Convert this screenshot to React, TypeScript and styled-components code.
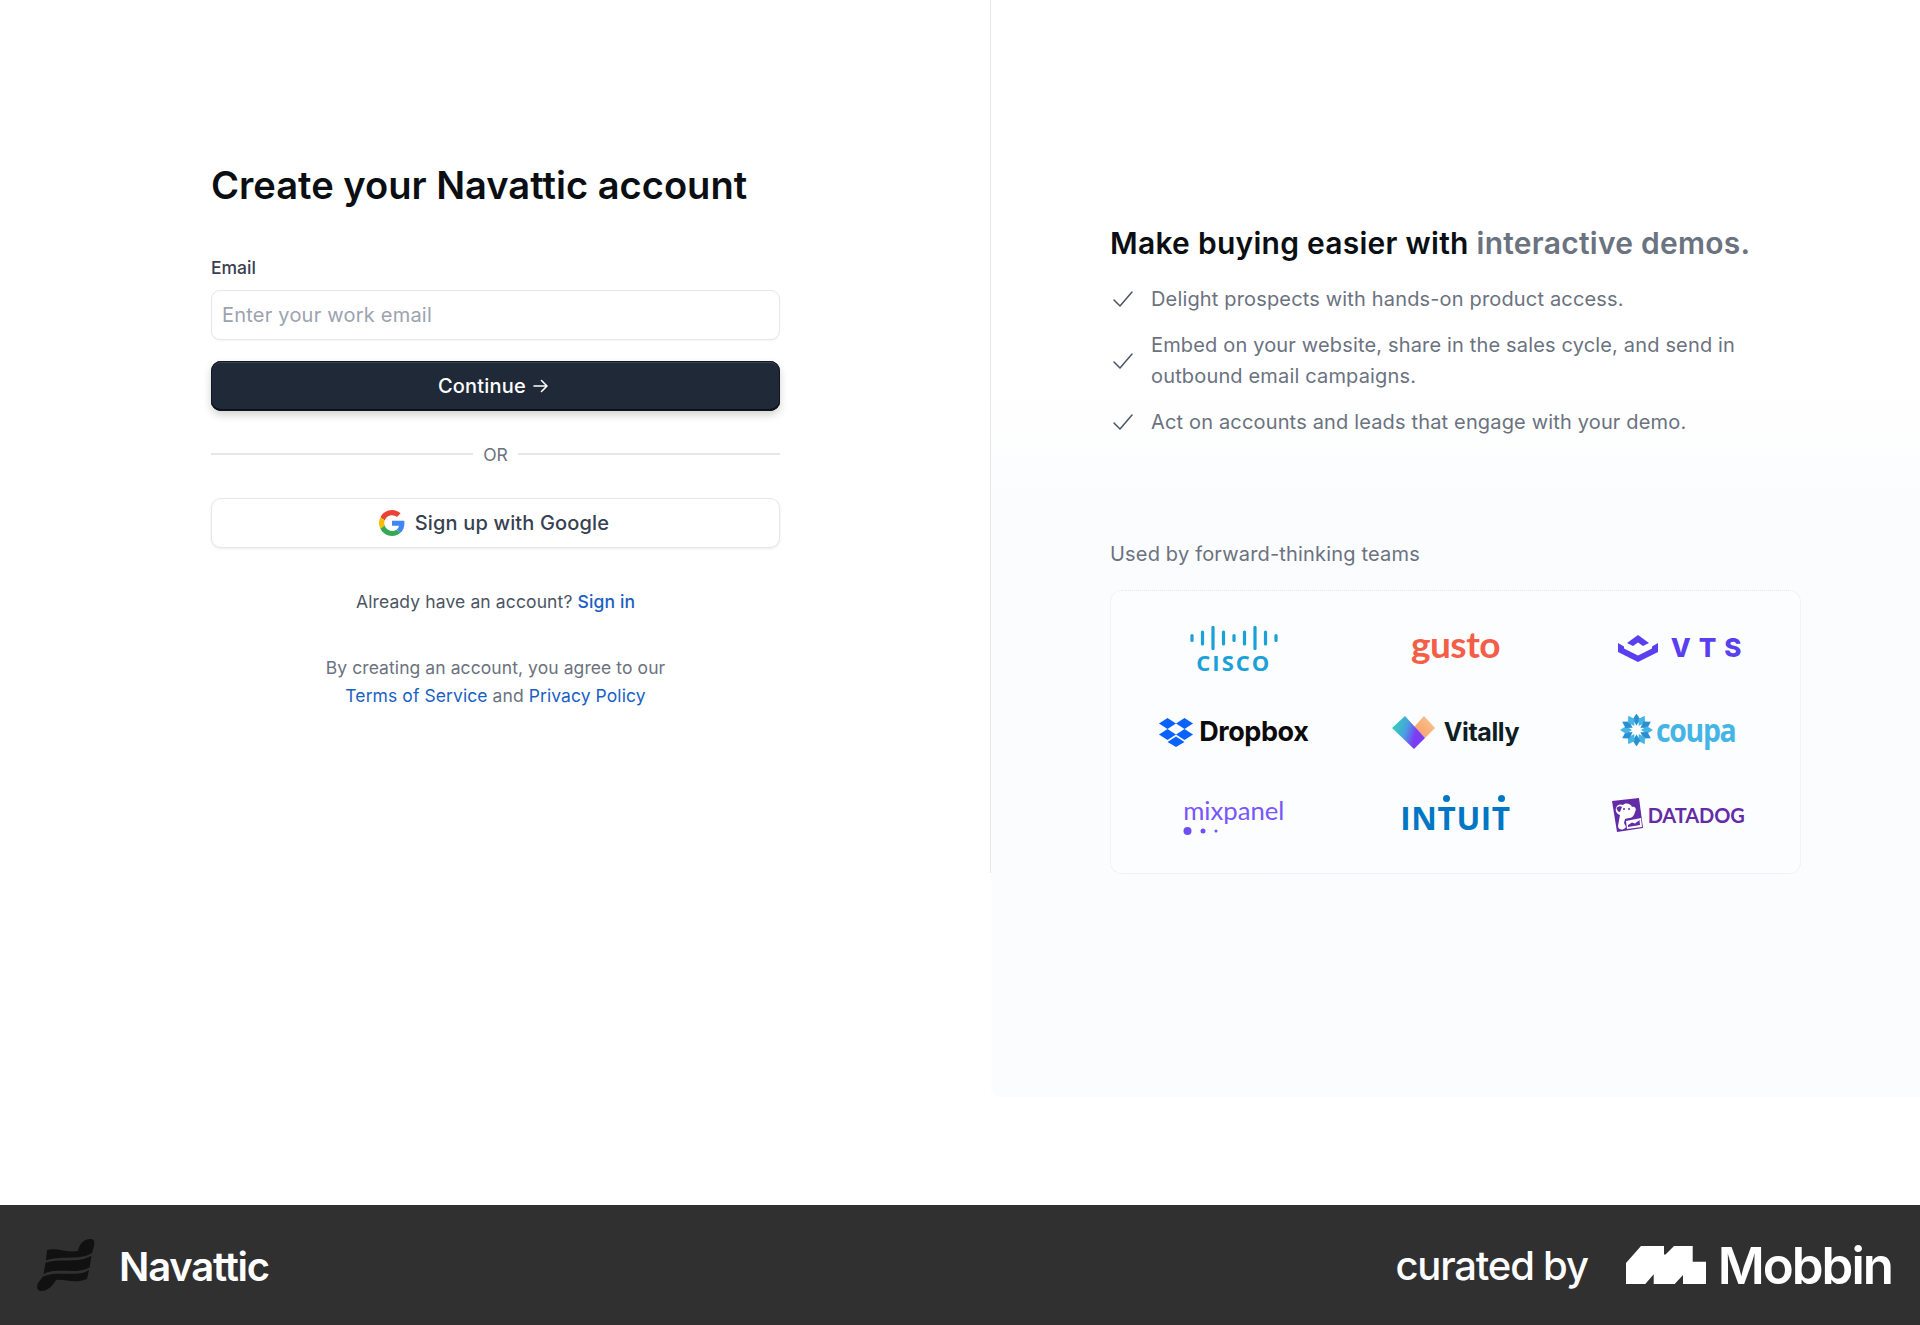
import React from "react";
import styled, { createGlobalStyle } from "styled-components";

const Global = createGlobalStyle`
  html, body { margin: 0; padding: 0; background: #fff; }
  body { font-family: Inter, "Liberation Sans", sans-serif; -webkit-font-smoothing: antialiased; }
  * { box-sizing: border-box; }
`;

const Page = styled.div`
  width: 1920px;
  height: 1325px;
  display: flex;
  flex-direction: column;
  overflow: hidden;
`;
const Top = styled.div`
  height: 1205px;
  display: flex;
  align-items: flex-start;
`;
const LeftPanel = styled.section`
  width: 991px;
  height: 873px;
  flex: none;
  border-right: 1px solid #e5e7eb;
  padding: 160px 0 0 211px;
`;
const Form = styled.div`
  width: 569px;
  display: flex;
  flex-direction: column;
`;
const Title = styled.h1`
  margin: 0 0 45px;
  font-size: 38.100px;
  line-height: 50px;
  font-weight: 600;
  color: #0b0f14;
  white-space: nowrap;
`;
const Label = styled.label`
  font-size: 17.5px;
  line-height: 25px;
  font-weight: 500;
  color: #374151;
  margin-bottom: 10px;
`;
const Input = styled.input`
  height: 50px;
  border: 1.5px solid #e5e7eb;
  border-radius: 9px;
  background: #fff;
  padding: 0 10px;
  font: 400 20px Inter, sans-serif;
  letter-spacing: 0.22px;
  color: #111827;
  box-shadow: 0 1px 2px rgba(0, 0, 0, 0.04);
  outline: none;
  &::placeholder { color: #9ca3af; opacity: 1; }
`;
const PrimaryButton = styled.button`
  margin-top: 21px;
  height: 50px;
  border: none;
  border-radius: 10px;
  padding: 0 5px 0 0;
  background: #1f2937;
  color: #fff;
  font: 500 20px Inter, sans-serif;
  letter-spacing: 0.2px;
  display: flex;
  align-items: center;
  justify-content: center;
  gap: 7px;
  box-shadow: inset 0 0 0 1px #10161f, inset 0 -2px 0 #0c1118, inset 0 2px 0 #3b4450, 0 4px 8px rgba(0, 0, 0, 0.18);
`;
const Divider = styled.div`
  margin-top: 31px;
  height: 24px;
  display: flex;
  align-items: center;
  gap: 10px;
  font-size: 17.5px;
  color: #6b7280;
  &::before, &::after { content: ""; flex: 1; height: 1.5px; background: #e5e7eb; }
`;
const GoogleButton = styled.button`
  margin-top: 32px;
  height: 50px;
  border: 1.5px solid #e5e7eb;
  border-radius: 10px;
  padding: 0 3px 0 0;
  background: #fff;
  color: #374151;
  font: 500 20px Inter, sans-serif;
  letter-spacing: 0.15px;
  display: flex;
  align-items: center;
  justify-content: center;
  gap: 10px;
  box-shadow: 0 1px 3px rgba(0, 0, 0, 0.08);
`;
const Already = styled.p`
  margin: 41px 0 0;
  text-align: center;
  font-size: 17.5px;
  line-height: 25px;
  letter-spacing: 0.12px;
  color: #4b5563;
`;
const Terms = styled.p`
  margin: 40px 0 0;
  text-align: center;
  font-size: 17.5px;
  line-height: 27.5px;
  letter-spacing: 0.08px;
  color: #6b7280;
`;
const TextLink = styled.a<{ $strong?: boolean }>`
  color: #1a5fc4;
  font-weight: ${(p) => (p.$strong ? 500 : 400)};
  text-decoration: none;
`;

const RightPanel = styled.section`
  flex: 1;
  height: 1097px;
  background: linear-gradient(#ffffff 0, #ffffff 380px, #fbfcfe 520px, #fbfcfe 100%);
  border-bottom-left-radius: 8px;
  padding: 220px 0 0 119px;
`;
const Heading = styled.h2`
  margin: 0 0 17.500px;
  font-size: 30px;
  line-height: 46px;
  font-weight: 600;
  letter-spacing: 0.26px;
  color: #0b0f14;
  white-space: nowrap;
`;
const Muted = styled.span`
  color: #6b7280;
`;
const Benefits = styled.ul`
  list-style: none;
  margin: 0;
  padding: 0;
  width: 640px;
  display: flex;
  flex-direction: column;
  gap: 15px;
`;
const Benefit = styled.li`
  display: flex;
  align-items: center;
  gap: 17px;
  font-size: 20px;
  line-height: 31px;
  letter-spacing: 0.16px;
  color: #6b7280;
`;
const Used = styled.p`
  margin: 101.500px 0 0;
  font-size: 20px;
  line-height: 30px;
  letter-spacing: 0.18px;
  color: #6b7280;
`;
const LogoCard = styled.div`
  margin-top: 21px;
  width: 691px;
  height: 284px;
  background: rgba(255, 255, 255, 0.4);
  border: 1.5px dotted #e4e6ea;
  border-radius: 12px;
  padding: 15px 12px;
  display: grid;
  grid-template-columns: repeat(3, 1fr);
  grid-auto-rows: 84px;
`;
const LogoCell = styled.div<{ $left?: number; $top?: number; $bottom?: number }>`
  display: flex;
  align-items: center;
  justify-content: center;
  padding-left: ${(p) => p.$left ?? 0}px;
  padding-top: ${(p) => p.$top ?? 0}px;
  padding-bottom: ${(p) => p.$bottom ?? 0}px;
`;
const CiscoStack = styled.div`
  display: flex;
  flex-direction: column;
  align-items: center;
  gap: 2px;
`;
const CiscoWord = styled.span`
  font: 700 22px/21px "Open Sans", sans-serif;
  letter-spacing: 2px;
  color: #1ba0d7;
`;
const Gusto = styled.span`
  font: 700 37px/40px Lato, sans-serif;
  letter-spacing: -0.5px;
  color: #f45d48;
`;
const VtsWord = styled.span`
  font: 800 26px/30px Inter, sans-serif;
  letter-spacing: 8px;
  margin-left: 13px;
  margin-right: -8px;
  color: #5a3ff0;
`;
const DropboxWord = styled.span`
  font: 700 27px/30px Inter, sans-serif;
  letter-spacing: -0.4px;
  margin-left: 6px;
  color: #0b0b0b;
`;
const VitallyWord = styled.span`
  font: 700 25px/30px Inter, sans-serif;
  letter-spacing: -0.4px;
  margin-left: 9px;
  color: #0f1d24;
`;
const CoupaWord = styled.span`
  display: inline-block;
  font: 700 33px/34px "Open Sans", sans-serif;
  letter-spacing: -1.5px;
  margin-left: 2px;
  margin-right: -13px;
  transform: scaleX(0.86);
  transform-origin: left center;
  color: #45b5e6;
`;
const MixStack = styled.div`
  display: flex;
  flex-direction: column;
  align-items: flex-start;
  gap: 3px;
`;
const MixWord = styled.span`
  font: 400 25.700px/26px Lato, sans-serif;
  color: #7856ff;
`;
const Intuit = styled.span`
  font: 700 31.500px/31px "Open Sans", sans-serif;
  letter-spacing: 0.6px;
  color: #0077c5;
`;
const IntuitT = styled.span`
  position: relative;
  &::before {
    content: "";
    position: absolute;
    left: 50%;
    top: -1px;
    width: 7px;
    height: 7px;
    margin-left: -3.500px;
    border-radius: 50%;
    background: #0077c5;
  }
`;
const DatadogWord = styled.span`
  font: 700 20px/24px Lato, sans-serif;
  letter-spacing: -0.1px;
  margin-left: 5px;
  color: #632ca6;
`;

const Footer = styled.footer`
  height: 120px;
  background: #303030;
  display: flex;
  align-items: center;
  justify-content: space-between;
  padding: 0 28px 0 37px;
`;
const Brand = styled.div`
  display: flex;
  align-items: center;
  gap: 24px;
`;
const BrandName = styled.span`
  font-size: 40px;
  line-height: 48px;
  font-weight: 600;
  letter-spacing: -1.2px;
  padding-top: 4px;
  color: #fff;
`;
const Curated = styled.div`
  display: flex;
  align-items: center;
`;
const CuratedBy = styled.span`
  font-size: 40px;
  font-weight: 500;
  letter-spacing: -1.2px;
  color: #fff;
  margin-right: 38px;
`;
const Mobbin = styled.span`
  font-size: 51px;
  font-weight: 600;
  letter-spacing: -2px;
  color: #fff;
  margin-left: 12px;
`;

const Check = () => (
  <svg width="22" height="22" viewBox="0 0 22 22" fill="none" stroke="#4b5563" strokeWidth="1.5" strokeLinecap="round" strokeLinejoin="round" style={{ flex: "none", marginLeft: 2 }}>
    <path d="M2 12 L8 18 L20 4" />
  </svg>
);

const GoogleIcon = () => (
  <svg width="26" height="26" viewBox="0 0 48 48">
    <path fill="#EA4335" d="M24 9.5c3.5 0 6.7 1.3 9.1 3.5l6.8-6.8C35.8 2.4 30.300 0 24 0 14.600 0 6.500 5.400 2.600 13.200l7.900 6.100C12.400 13.600 17.700 9.500 24 9.500z" />
    <path fill="#4285F4" d="M47 24.500c0-1.600-.1-3.100-.4-4.500H24v9h12.900c-.6 3-2.200 5.500-4.700 7.200l7.600 5.900C44.300 38 47 31.800 47 24.500z" />
    <path fill="#FBBC05" d="M10.500 28.700C10 27.200 9.800 25.600 9.800 24s.3-3.200.7-4.700l-7.900-6.100C.9 16.500 0 20.100 0 24s.9 7.500 2.600 10.800l7.900-6.100z" />
    <path fill="#34A853" d="M24 48c6.500 0 11.900-2.100 15.800-5.800l-7.600-5.900c-2.100 1.400-4.900 2.300-8.200 2.300-6.300 0-11.600-4.200-13.500-9.900l-7.900 6.100C6.500 42.600 14.600 48 24 48z" />
  </svg>
);

const Arrow = () => (
  <svg width="15" height="14" viewBox="0 0 15 14" fill="none" stroke="#fff" strokeWidth="1.6" strokeLinecap="round" strokeLinejoin="round">
    <path d="M1 7 H14 M8.500 1.500 L14 7 L8.500 12.500" />
  </svg>
);

const CiscoBars = () => {
  const hs = [7, 14, 23, 14, 7, 14, 23, 14, 7];
  return (
    <svg width="90" height="24" viewBox="0 0 90 24" stroke="#1ba0d7" strokeWidth="3.200" strokeLinecap="round">
      {hs.map((h, i) => (
        <line key={i} x1={3 + i * 10.500} x2={3 + i * 10.500} y1={12 - h / 2 + 1} y2={12 + h / 2 - 1} />
      ))}
    </svg>
  );
};

const VtsMark = () => (
  <svg width="40" height="27" viewBox="0 0 40 27" fill="#5a3ff0">
    <path d="M20 0 L31 8 L25 11 L20 7.500 L15 11 L9 8 Z" />
    <path d="M0 8 L6 11.500 V13.500 L20 20.500 L34 13.500 V11.500 L40 8 V17 L20 27 L0 17 Z" />
  </svg>
);

const DropboxMark = () => (
  <svg width="34" height="29" viewBox="0 0 34 29" fill="#0a62fe">
    <path d="M8.500 0 L17 5.500 L8.500 11 L0 5.500 Z" />
    <path d="M25.500 0 L34 5.500 L25.500 11 L17 5.500 Z" />
    <path d="M8.500 11 L17 16.500 L8.500 22 L0 16.500 Z" />
    <path d="M25.500 11 L34 16.500 L25.500 22 L17 16.500 Z" />
    <path d="M17 18.500 L25.500 24 L17 29 L8.500 24 Z" />
  </svg>
);

const VitallyMark = () => (
  <svg width="43" height="33" viewBox="0 0 43 33">
    <defs>
      <linearGradient id="vitA" x1="0" y1="0.2" x2="1" y2="0.5">
        <stop offset="0" stopColor="#2fd8b0" />
        <stop offset="0.45" stopColor="#4a9fe0" />
        <stop offset="0.75" stopColor="#7a3df5" />
      </linearGradient>
      <linearGradient id="vitB" x1="0" y1="1" x2="1" y2="0">
        <stop offset="0" stopColor="#f79a6b" />
        <stop offset="1" stopColor="#fbc98a" />
      </linearGradient>
    </defs>
    <path d="M32 0 L43 12 L33 22 L22 11 Z" fill="url(#vitB)" />
    <path d="M13 0 L33 22 L22 33 L0 12 Z" fill="url(#vitA)" />
  </svg>
);

const CoupaMark = () => {
  const petals = Array.from({ length: 12 }, (_, i) => i * 30);
  return (
    <svg width="35" height="32" viewBox="-17.500 -16 35 32">
      {petals.map((a, i) => (
        <path key={a} d="M0 -4.500 L3.800 -10.500 L0 -16.500 L-3.800 -10.500 Z" fill={i % 2 ? "#45b5e6" : "#2a8fd0"} transform={`rotate(${a})`} />
      ))}
    </svg>
  );
};

const DatadogMark = () => (
  <svg width="31" height="34" viewBox="0 0 31 34">
    <path d="M0 3 L27 0 L31 30 L5 34 Z" fill="#632ca6" />
    <path d="M4 10 C5 6 9 6 11 7 C14 4 19 6 20 9 C23 8 25 11 23 14 C22 18 20 20 17 20 L13 21 L12 25 L14 29 C11 33 6 32 6 28 L8 17 C5 16 3 13 4 10 Z" fill="#fff" />
    <path d="M14 23 L29 20 L30 29 L15 31 Z" fill="#fff" />
    <path d="M16 27 L20 24.500 L23 25.500 L27.500 22 L28 27 L16 29 Z" fill="#632ca6" />
    <circle cx="12" cy="11" r="1" fill="#632ca6" />
    <circle cx="17" cy="11" r="1" fill="#632ca6" />
    <path d="M4.500 10 C6 8 9 8 10 9 L8 14 C6 14 5 12 4.500 10 Z" fill="#632ca6" />
  </svg>
);

const MixDots = () => (
  <svg width="40" height="10" viewBox="0 0 40 10" fill="#6f4ff2">
    <circle cx="4.500" cy="5" r="4" />
    <circle cx="20" cy="5" r="2.500" />
    <circle cx="33" cy="5" r="1.500" />
  </svg>
);

const NavatticMark = () => (
  <svg width="58" height="54" viewBox="0 0 58 54" fill="#111">
    <path d="M10 12 C20 9 30 15 41 13 C42 6 47 1 53 1 C57 1 58 3 57 8 L55 15 C42 23 22 17 9 22.500 Z" />
    <path d="M8.500 25 C22 19.500 42 26 54.500 17.500 L52.500 29.500 C40 37 20 29 6.500 36 Z" />
    <path d="M6 38.500 C20 32 40 40 52 32 L50 41 C38 46 28 41 19 42 C16 48 9 54 3 53 C-1 52 0 47 1 45 Z" />
  </svg>
);

const MobbinMark = () => (
  <svg width="80" height="38" viewBox="0 0 80 38" fill="#fff">
    <path d="M0 38 V17 L15 0 H38 V8.500 H39.500 L48 0 H66.700 V15.700 H80 V38 H57 V29 L48.700 38 H27.700 V28.300 L19.300 38 Z" />
  </svg>
);

export default function App() {
  return (
    <Page>
      <Global />
      <Top>
        <LeftPanel>
          <Form>
            <Title>Create your Navattic account</Title>
            <Label htmlFor="email">Email</Label>
            <Input id="email" placeholder="Enter your work email" />
            <PrimaryButton>Continue <Arrow /></PrimaryButton>
            <Divider>OR</Divider>
            <GoogleButton><GoogleIcon />Sign up with Google</GoogleButton>
            <Already>Already have an account? <TextLink href="#" $strong>Sign in</TextLink></Already>
            <Terms>
              By creating an account, you agree to our<br />
              <TextLink href="#">Terms of Service</TextLink> and <TextLink href="#">Privacy Policy</TextLink>
            </Terms>
          </Form>
        </LeftPanel>
        <RightPanel>
          <Heading>Make buying easier with <Muted>interactive demos.</Muted></Heading>
          <Benefits>
            <Benefit><Check />Delight prospects with hands-on product access.</Benefit>
            <Benefit><Check />Embed on your website, share in the sales cycle, and send in outbound email campaigns.</Benefit>
            <Benefit><Check />Act on accounts and leads that engage with your demo.</Benefit>
          </Benefits>
          <Used>Used by forward-thinking teams</Used>
          <LogoCard>
            <LogoCell $top={2}><CiscoStack><CiscoBars /><CiscoWord>CISCO</CiscoWord></CiscoStack></LogoCell>
            <LogoCell $bottom={8}><Gusto>gusto</Gusto></LogoCell>
            <LogoCell $left={5}><VtsMark /><VtsWord>VTS</VtsWord></LogoCell>
            <LogoCell><DropboxMark /><DropboxWord>Dropbox</DropboxWord></LogoCell>
            <LogoCell><VitallyMark /><VitallyWord>Vitally</VitallyWord></LogoCell>
            <LogoCell $bottom={4}><CoupaMark /><CoupaWord>coupa</CoupaWord></LogoCell>
            <LogoCell><MixStack><MixWord>mixpanel</MixWord><MixDots /></MixStack></LogoCell>
            <LogoCell $top={3}><Intuit>IN<IntuitT>T</IntuitT>UI<IntuitT>T</IntuitT></Intuit></LogoCell>
            <LogoCell $left={2} $bottom={2}><DatadogMark /><DatadogWord>DATADOG</DatadogWord></LogoCell>
          </LogoCard>
        </RightPanel>
      </Top>
      <Footer>
        <Brand><NavatticMark /><BrandName>Navattic</BrandName></Brand>
        <Curated>
          <CuratedBy>curated by</CuratedBy>
          <MobbinMark />
          <Mobbin>Mobbin</Mobbin>
        </Curated>
      </Footer>
    </Page>
  );
}
